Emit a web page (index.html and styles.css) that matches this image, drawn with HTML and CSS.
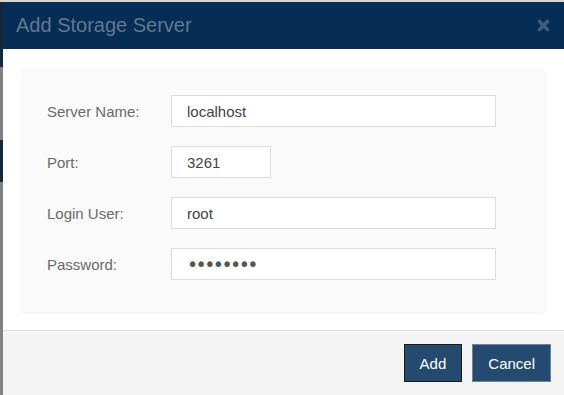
FILE: index.html
```html
<!DOCTYPE html>
<html lang="en">
<head>
    <meta charset="UTF-8">
    <title>Add Storage Server</title>
    <link rel="stylesheet" href="styles.css">
</head>
<body>
    <div class="screen">
        <div class="edge">
            <div class="edge-dark edge-top"></div>
            <div class="edge-gray edge-mid"></div>
            <div class="edge-dark edge-bar"></div>
            <div class="edge-gray edge-rest"></div>
        </div>

        <div class="modal">
            <div class="modal-header">
                <h2 class="modal-title">Add Storage Server</h2>
                <button class="close" title="Close">
                    <svg width="13" height="13" viewBox="0 0 13 13">
                        <path d="M2.5 2.5 L10.5 10.5 M10.5 2.5 L2.5 10.5" stroke="#3d5d80" stroke-width="3.6" stroke-linecap="round"/>
                    </svg>
                </button>
            </div>

            <div class="modal-body">
                <div class="panel">
                    <form class="form-grid">
                        <label for="serverName">Server Name:</label>
                        <input type="text" id="serverName" value="localhost">

                        <label for="port">Port:</label>
                        <input type="text" id="port" class="short" value="3261">

                        <label for="loginUser">Login User:</label>
                        <input type="text" id="loginUser" value="root">

                        <label for="password">Password:</label>
                        <input type="password" id="password" value="password">
                    </form>
                </div>
            </div>

            <div class="modal-footer">
                <button class="btn btn-focus">Add</button>
                <button class="btn">Cancel</button>
            </div>
        </div>
    </div>
</body>
</html>
```

FILE: styles.css
```css
html, body {
    margin: 0;
    height: 100%;
    overflow: hidden;
}
body {
    font-family: "Liberation Sans", Arial, sans-serif;
    background-color: #d6d6d6;
}
.screen {
    display: flex;
    height: 395px;
    padding-top: 2px;
    box-sizing: border-box;
}
.edge {
    width: 3px;
    display: flex;
    flex-direction: column;
}
.edge-dark {
    background-color: #13273d;
}
.edge-gray {
    background-color: #828282;
}
.edge-top {
    height: 65px;
}
.edge-mid {
    height: 73px;
}
.edge-bar {
    height: 42px;
}
.edge-rest {
    flex: 1;
}
.modal {
    flex: 1;
    display: flex;
    flex-direction: column;
    background-color: #fff;
}
.modal-header {
    height: 47px;
    background-color: #052d55;
    display: flex;
    align-items: center;
    justify-content: space-between;
    padding: 0 14px 0 13px;
}
.modal-title {
    margin: 0;
    font-size: 20px;
    font-weight: normal;
    color: #627890;
}
.close {
    background: none;
    border: none;
    padding: 0;
    width: 13px;
    height: 13px;
    display: flex;
    cursor: pointer;
}
.modal-body {
    padding: 20px 19px 18px 19px;
}
.panel {
    background-color: #fafafa;
    border-radius: 4px;
    box-shadow: 0 1px 3px rgba(0, 0, 0, 0.07);
    padding: 26px 49px 32px 25px;
}
.form-grid {
    display: grid;
    grid-template-columns: 124px 1fr;
    row-gap: 19px;
    align-items: center;
}
.form-grid label {
    font-size: 15px;
    color: #6a6a6a;
}
.form-grid input {
    box-sizing: border-box;
    height: 32px;
    width: 100%;
    border: 1px solid #dcdcdc;
    background-color: #fff;
    padding: 0 15px;
    font-family: "Liberation Sans", Arial, sans-serif;
    font-size: 15px;
    color: #444;
    outline: none;
}
.form-grid input.short {
    width: 100px;
}
.form-grid input[type="password"] {
    font-family: "DejaVu Sans", sans-serif;
    font-size: 19px;
    letter-spacing: -2.6px;
    color: #555;
    padding-left: 15px;
}
.modal-footer {
    flex: 1;
    border-top: 1px solid #dedede;
    background-color: #f4f4f4;
    display: flex;
    justify-content: flex-end;
    align-items: flex-start;
    gap: 10px;
    padding: 13px 13px 0 0;
}
.btn {
    height: 38px;
    padding: 0 15px;
    background-color: #244a6f;
    color: #fff;
    border: 1px solid #6a82a4;
    font-family: "Liberation Sans", Arial, sans-serif;
    font-size: 15px;
    cursor: pointer;
}
.btn-focus {
    border-color: #1a1a1a;
}
```
